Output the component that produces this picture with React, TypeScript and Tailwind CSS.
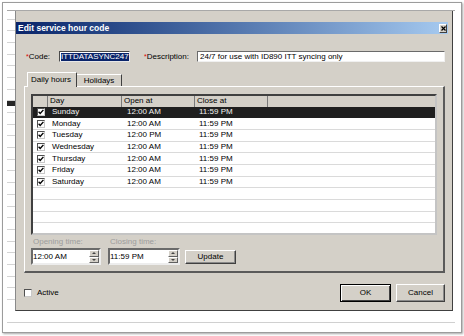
import React from "react";

const rows: [string, string, string][] = [
  ["Sunday", "12:00 AM", "11:59 PM"],
  ["Monday", "12:00 AM", "11:59 PM"],
  ["Tuesday", "12:00 PM", "11:59 PM"],
  ["Wednesday", "12:00 AM", "11:59 PM"],
  ["Thursday", "12:00 AM", "11:59 PM"],
  ["Friday", "12:00 AM", "11:59 PM"],
  ["Saturday", "12:00 AM", "11:59 PM"],
];

function Check({ checked }: { checked: boolean }) {
  return (
    <div className="w-[8px] h-[8px] shrink-0 bg-white border border-t-[#505050] border-l-[#505050] border-r-[#c8c8c8] border-b-[#c8c8c8] flex items-center justify-center">
      {checked && (
        <svg width="6" height="6" viewBox="0 0 6 6">
          <path d="M0.6 2.8 L2.2 4.5 L5.4 0.9" stroke="#000" strokeWidth="1.4" fill="none" />
        </svg>
      )}
    </div>
  );
}

function Strip() {
  return (
    <div className="w-[8px] h-[300px] overflow-hidden flex flex-col bg-white">
      <div className="h-[8.5px] shrink-0 border-b border-[#d4d4d4]" />
      {Array.from({ length: 26 }).map((_, i) => (
        <div key={i} className="h-[11.7px] shrink-0 border-b border-[#d4d4d4]">
          {i === 7 && <div className="h-[5px] bg-[#262626]" />}
        </div>
      ))}
    </div>
  );
}

function Spinner() {
  return (
    <div className="w-[10px] self-stretch flex flex-col">
      <div className="flex-1 bg-[#d4d0c8] border border-t-white border-l-white border-r-[#606060] border-b-[#606060] flex items-center justify-center">
        <svg width="4" height="2" viewBox="0 0 4 2">
          <path d="M0 2 L2 0 L4 2 Z" fill="#444" />
        </svg>
      </div>
      <div className="flex-1 bg-[#d4d0c8] border border-t-white border-l-white border-r-[#606060] border-b-[#606060] flex items-center justify-center">
        <svg width="4" height="2" viewBox="0 0 4 2">
          <path d="M0 0 L2 2 L4 0 Z" fill="#444" />
        </svg>
      </div>
    </div>
  );
}

function TimeInput({ value, width }: { value: string; width: string }) {
  return (
    <div
      className={`${width} h-[17px] bg-white border-2 border-t-[#6a6a6a] border-l-[#6a6a6a] border-r-[#ededed] border-b-[#ededed] flex items-center justify-between`}
    >
      <span className="pl-[0px]">{value}</span>
      <Spinner />
    </div>
  );
}

function ListView() {
  return (
    <div className="w-[406px] h-[141px] bg-white border-2 border-t-[#404040] border-l-[#404040] border-r-[#c4c4c4] border-b-[#c4c4c4] flex flex-col overflow-hidden">
      <div className="h-[10.5px] shrink-0 flex bg-[#d4d0c8]">
        <div className="w-[15px] border-r border-[#7a7a7a]" />
        <div className="w-[74px] border-r border-[#7a7a7a] pl-[2px] flex items-center">Day</div>
        <div className="w-[73px] border-r border-[#7a7a7a] pl-[2px] flex items-center">Open at</div>
        <div className="w-[73px] border-r border-[#7a7a7a] pl-[2px] flex items-center">Close at</div>
        <div className="flex-1" />
      </div>
      {rows.map((r, i) => (
        <div
          key={r[0]}
          className={
            i === 0
              ? "h-[11.7px] shrink-0 flex items-center bg-[#1f1f1f] text-[#f2f2f2]"
              : "h-[11.7px] shrink-0 flex items-center border-b border-[#dadada]"
          }
        >
          <div className="w-[15px] pl-[4px] flex items-center">
            <Check checked />
          </div>
          <div className="w-[74px] pl-[4px]">{r[0]}</div>
          <div className="w-[73px] pl-[5px]">{r[1]}</div>
          <div className="w-[73px] pl-[4px]">{r[2]}</div>
        </div>
      ))}
      {Array.from({ length: 4 }).map((_, i) => (
        <div key={i} className="h-[11.7px] shrink-0 border-b border-[#dadada]" />
      ))}
    </div>
  );
}

function Dialog() {
  return (
    <div className="w-[438px] h-[300px] bg-[#d4d0c8] border-l border-r border-b border-l-[#8a8a8a] border-r-[#404040] border-b-[#404040] flex flex-col pt-[11px]">
      {/* title bar */}
      <div className="w-[432px] h-[12px] bg-linear-to-r from-[#0a246a] to-[#a6caf0] flex items-center justify-between pl-[2px] pr-[1px]">
        <span className="text-white font-bold text-[8.5px] leading-none">Edit service hour code</span>
        <div className="w-[8px] h-[9px] bg-[#d4d0c8] border border-t-white border-l-white border-r-[#404040] border-b-[#404040] flex items-center justify-center">
          <svg width="5" height="5" viewBox="0 0 5 5">
            <path d="M0.5 0.5 L4.5 4.5 M4.5 0.5 L0.5 4.5" stroke="#000" strokeWidth="1.2" />
          </svg>
        </div>
      </div>

      {/* code row */}
      <div className="mt-[17px] h-[11px] flex items-center">
        <div className="ml-[10px] w-[33px] flex items-center">
          <span className="text-[#e00000] text-[7px] self-start leading-none">*</span>
          <span>Code:</span>
        </div>
        <div className="w-[71px] h-[11px] bg-white border border-t-[#4a4a4a] border-l-[#4a4a4a] border-r-[#e8e8e8] border-b-[#e8e8e8] flex items-center pl-[1px]">
          <span className="bg-[#0a246a] text-white leading-[8px]">ITTDATASYNC247</span>
        </div>
        <div className="w-[67px] pl-[14px] flex items-center">
          <span className="text-[#e00000] text-[7px] self-start leading-none">*</span>
          <span>Description:</span>
        </div>
        <div className="w-[248px] h-[11px] bg-white border border-t-[#6a6a6a] border-l-[#6a6a6a] border-r-[#f0f0f0] border-b-[#f0f0f0] flex items-center pl-[2px]">
          24/7 for use with ID890 ITT syncing only
        </div>
      </div>

      {/* tabs */}
      <div className="mt-[10px] ml-[8px] pl-[3px] h-[14px] flex items-end">
        <div className="relative z-10 w-[50px] h-[15px] -mb-[1px] bg-[#d4d0c8] border-t border-l border-white border-r border-r-[#404040] rounded-t-[1px] flex items-center pl-[3px] pb-[1px]">
          Daily hours
        </div>
        <div className="w-[45px] h-[12px] bg-[#d4d0c8] border-t border-t-white border-r border-r-[#404040] flex items-center justify-center">
          Holidays
        </div>
      </div>

      {/* panel */}
      <div className="ml-[8px] w-[421px] h-[187px] border-t border-l border-white border-r-2 border-b-2 border-r-[#5a5a5a] border-b-[#5a5a5a] flex flex-col pt-[7px] pl-[6px]">
        <ListView />
        <div className="mt-[2px] h-[10px] flex items-center text-[#9c9c9c]">
          <div className="w-[77px] pl-[2px]">Opening time:</div>
          <div className="pl-[2px]">Closing time:</div>
        </div>
        <div className="mt-[1px] h-[17px] flex items-center">
          <TimeInput value="12:00 AM" width="w-[70px]" />
          <div className="ml-[7px]">
            <TimeInput value="11:59 PM" width="w-[72px]" />
          </div>
          <div className="ml-[5px] w-[51px] h-[14px] bg-[#d4d0c8] border border-t-white border-l-white border-r-[#404040] border-b-[#404040] shadow-[inset_-1px_-1px_0_#8a8a8a] flex items-center justify-center">
            Update
          </div>
        </div>
      </div>

      {/* bottom row */}
      <div className="mt-[11px] h-[18px] flex items-center">
        <div className="ml-[8px]">
          <Check checked={false} />
        </div>
        <span className="ml-[5px]">Active</span>
        <div className="flex-1" />
        <div className="w-[51px] h-[18px] border border-black bg-[#d4d0c8] shadow-[inset_1px_1px_0_#fff,inset_-1px_-1px_0_#404040] flex items-center justify-center">
          OK
        </div>
        <div className="ml-[5px] mr-[7px] w-[49px] h-[18px] bg-[#d4d0c8] border border-t-white border-l-white border-r-[#404040] border-b-[#404040] shadow-[inset_-1px_-1px_0_#8a8a8a] flex items-center justify-center">
          Cancel
        </div>
      </div>
    </div>
  );
}

export default function App() {
  return (
    <div className="w-[464px] h-[336px] bg-white overflow-hidden font-['Liberation_Sans',Arial,sans-serif] text-[8px] leading-none text-black p-[2px]">
      <div className="w-[460px] h-[331px] border border-[#9c9c9c] shadow-[1px_1px_2px_rgba(0,0,0,0.35)] bg-white pt-[7px] pl-[4px]">
        <div className="w-[448px] border-t border-[#a8a8a8]">
          <div className="flex h-[300px]">
            <Strip />
            <Dialog />
            <div className="w-[2px] bg-white" />
          </div>
          <div className="mt-[11px] border-t border-[#d0d0d0]" />
        </div>
      </div>
    </div>
  );
}
